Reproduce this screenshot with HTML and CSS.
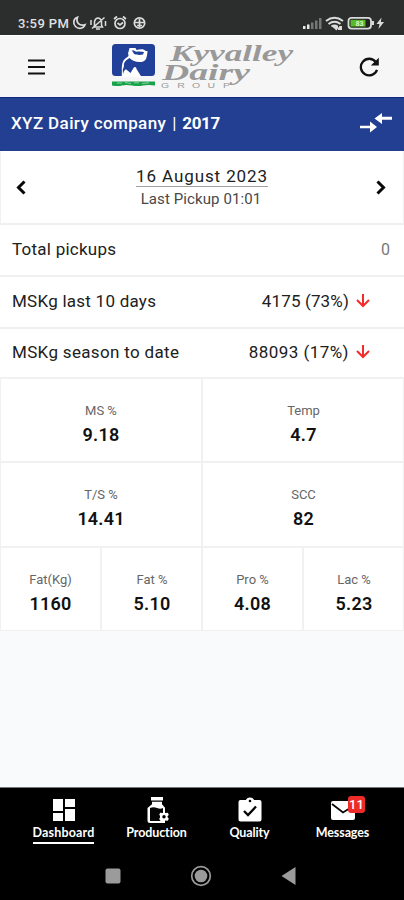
FILE: index.html
```html
<!DOCTYPE html>
<html lang="en">
<head>
<meta charset="utf-8">
<title>Dairy dashboard</title>
<link rel="stylesheet" href="styles.css">
</head>
<body>
<div class="phone">
  <div class="status">
    <span class="clock">3:59 PM</span>
    <svg class="status-icons" width="76" height="16" viewBox="0 0 76 16" fill="none" stroke="#dcdcdc" stroke-width="1.7">
      <path d="M5.500 2.200C1 3.600.8 8.800 3.500 11.500 6.600 14.600 11.500 13.600 13 9.700 7.500 11.400 3.500 7.500 5.500 2.200Z"/>
      <path d="M22 12h8.500l-1-2V6.500Q28.500 3 26 3t-3.500 3.500V10zM24 14h4M20 13.500 32.500 2.500M19 5v5M33.500 6v5" stroke-width="1.500"/>
      <circle cx="48" cy="8.500" r="5"/><path d="m42 4 3-2.500M54 4l-3-2.500M45.500 8l2.500 2 3-2.500"/>
      <circle cx="67.500" cy="8" r="5.200"/><path d="M67.500 4v8M63 7.500h9M65 10.500h5"/>
    </svg>
    <svg class="status-right" width="84" height="16" viewBox="0 0 84 16">
      <g fill="#e8e8e8"><path d="M1 11h2.500v3H1zM5 9.500h2.500V14H5z"/></g>
      <g fill="#757676"><path d="M9 7.500h2.500V14H9zM13 5.500h2.500V14H13zM17 3h2.500v11H17z"/></g>
      <g fill="none" stroke="#dcdcdc" stroke-width="2"><path d="M24 6q8.500-6.500 17 0M26.500 9q6-4.500 12 0M29.500 11.500q3-2 6 0"/></g>
      <path d="m29.500 11 5 4.500 3-4.500zM36 11h4v4h-4z" fill="#dcdcdc"/>
      <rect x="46.500" y="2.800" width="22.500" height="10.800" rx="3" fill="#202320" stroke="#dadada" stroke-width="1.800"/>
      <path d="M48.500 4.800h15v6.800h-15z" fill="#59b82b"/><path d="M69.500 6h2.500v4h-2.500z" fill="#dadada"/>
      <text class="battery" x="57.500" y="11" text-anchor="middle">83</text>
      <path d="m79.500 2.500-5 6.500h3l-1 5 5.500-7h-3.200z" fill="#dcdcdc"/>
    </svg>
  </div>
  <header class="header">
    <svg width="17" height="16" viewBox="0 0 17 16"><path d="M0 1.500h17M0 8h17M0 14.500h17" stroke="#111" stroke-width="2.200"/></svg>
    <svg class="logo" width="186" height="48" viewBox="0 0 186 48">
      <rect x="1" y="1" width="43" height="32" rx="3.500" fill="#21409a"/>
      <path d="M10.500 34c1-4-.5-9 1-14 1-4 4-5 6-7 0-2-1-3 0-4l1-4h6l1 2c4-1 8-1 9 1h2c-.5 6-1 10-6 11-5 .5-9-1-12-4l-3 2c-3 3-3 5-2 8l6 5 3-5c1-2 3-1 3 1l5 8z" fill="#fff"/>
      <path d="M20.500 7.500h2.500l2 1.200c3-.5 6-.3 8 .4l-1 2.400c-3 .7-7 .4-9-.5l-1-2z" fill="#21409a"/>
      <path d="m17 17-4 6q-2 4-1 8 1-4 4-6l2-3z" fill="#21409a"/>
      <path d="M1 38.500h43v4q-7-1-12 0t-11 0-10 0-10 0z" fill="#18a34a"/>
      <path d="M6 40h5m3-.5 6 1m3-.7h5m3 .6 7-.6" stroke="#bce3c6" stroke-width=".7" fill="none"/>
      <g class="brand">
        <text x="59" y="18" textLength="123" lengthAdjust="spacingAndGlyphs" class="brand-name">Kyvalley</text>
        <text x="51" y="36.500" textLength="88" lengthAdjust="spacingAndGlyphs" class="brand-name">Dairy</text>
        <text transform="translate(50 44.800) scale(1.5 1)" x="0 10.800 20.700 31 41.300" class="brand-group">GROUP</text>
      </g>
    </svg>
    <svg class="refresh" width="20" height="20" viewBox="0 0 20 20"><path d="M16.600 4.800A8.300 8.300 0 1 0 18 12.800" fill="none" stroke="#111" stroke-width="2.300"/><path d="M19.800.8V8.500h-8z" fill="#111"/></svg>
  </header>
  <div class="company">
    <div><span class="company-name">XYZ Dairy company</span><span class="bar">|</span><b class="year">2017</b></div>
    <svg width="32" height="20" viewBox="0 0 32 20"><path d="M0 12.700h10V8.500l7 5.500-7 5.500v-4.200H0zM32 3.700H22V0l-7.500 5.500L22 11V6.800h10z" fill="#fff"/></svg>
  </div>
  <section class="date">
    <svg width="10" height="15" viewBox="0 0 10 15"><path d="m8.500 1.500-6 6 6 6" fill="none" stroke="#080808" stroke-width="3"/></svg>
    <div class="date-text"><div class="day">16 August 2023</div><div class="pickup">Last Pickup 01:01</div></div>
    <svg width="10" height="15" viewBox="0 0 10 15"><path d="m1.500 1.500 6 6-6 6" fill="none" stroke="#080808" stroke-width="3"/></svg>
  </section>
  <section class="rows">
    <div class="row first"><span class="l1">Total pickups</span><span class="zero">0</span></div>
    <div class="row"><span class="l2">MSKg last 10 days</span><span class="value v1">4175 (73%)</span><svg class="down" width="14" height="14" viewBox="0 0 14 14"><path d="M7 0v12M1 6l6 6 6-6" fill="none" stroke="#f52b2b" stroke-width="2"/></svg></div>
    <div class="row"><span class="l3">MSKg season to date</span><span class="value v2">88093 (17%)</span><svg class="down" width="14" height="14" viewBox="0 0 14 14"><path d="M7 0v12M1 6l6 6 6-6" fill="none" stroke="#f52b2b" stroke-width="2"/></svg></div>
  </section>
  <section class="metrics">
    <div class="cell wide"><span>MS %</span><b>9.18</b></div>
    <div class="cell wide"><span>Temp</span><b>4.7</b></div>
    <div class="cell wide"><span>T/S %</span><b>14.41</b></div>
    <div class="cell wide"><span>SCC</span><b>82</b></div>
    <div class="cell"><span>Fat(Kg)</span><b>1160</b></div>
    <div class="cell"><span>Fat %</span><b>5.10</b></div>
    <div class="cell"><span>Pro %</span><b>4.08</b></div>
    <div class="cell"><span>Lac %</span><b>5.23</b></div>
  </section>
  <footer class="footer">
    <nav class="tabs">
      <div class="tab active"><svg width="26" height="26" viewBox="0 0 26 26"><path d="M2 2h10v12H2zM14 2h10v8H14zM2 16h10v8H2zM14 12h10v12H14z" fill="#fff"/></svg><span class="t1">Dashboard</span></div>
      <div class="tab"><svg width="26" height="26" viewBox="0 0 26 26"><path d="M7 0h12v3.500H7zM8 4.700h10v2.500l3 3.500V26H6q-2.500 0-2.500-2.500V11L8 7.200z" fill="#fff"/><path d="M6 11q3.500-1.500 7 0t6 0v5l-3 2v4.500l1 1.500H6z" fill="#050505"/><path d="m20 14 1.300 2 2.500-.3 1 2-1.500 2 1.500 2-1 2-2.500-.3-1.300 2-1.300-2-2.500.3-1-2 1.500-2-1.500-2 1-2 2.500.3z" fill="#fff"/><circle cx="20" cy="19.700" r="1.700"/></svg><span class="t2">Production</span></div>
      <div class="tab"><svg width="26" height="26" viewBox="0 0 26 26"><path d="M3.500 3H9q.7-2.500 4-2.500T17 3h5.500q2 0 2 2v17.500q0 2-2 2h-19q-2 0-2-2V5q0-2 2-2z" fill="#fff"/><circle cx="13" cy="4" r="1.300"/><path d="m7 14 4 4 8-8.500" stroke="#050505" stroke-width="2.300" fill="none"/></svg><span class="t3">Quality</span></div>
      <div class="tab"><svg width="26" height="26" viewBox="0 0 26 26"><path d="M3 4h20q2 0 2 2v15q0 2-2 2H3q-2 0-2-2V6q0-2 2-2z" fill="#fff"/><path d="m2 7 11 8.500L25 8" stroke="#050505" stroke-width="1.800" fill="none"/></svg><span class="t4">Messages</span><i class="badge">11</i></div>
    </nav>
    <div class="system">
      <svg width="16" height="16" viewBox="0 0 16 16"><rect x=".5" y=".5" width="15" height="15" rx="2" fill="#9b9b9b"/></svg>
      <svg width="22" height="22" viewBox="0 0 22 22"><circle cx="11" cy="11" r="9.300" fill="none" stroke="#9b9b9b" stroke-width="1.700"/><circle cx="11" cy="11" r="6.300" fill="#9b9b9b"/></svg>
      <svg width="15" height="18" viewBox="0 0 15 18"><path d="M14.500 0v18L.5 9z" fill="#9b9b9b"/></svg>
    </div>
  </footer>
</div>
</body>
</html>
```
FILE: styles.css
```css
* { box-sizing: border-box; }
body { margin: 0; background: #f8fafb; color: #202020; font-family: Roboto, sans-serif; }
svg { display: block; flex: none; }
.phone { width: 404px; height: 900px; display: flex; flex-direction: column; overflow: hidden; white-space: nowrap; }
.status { height: 35px; flex: none; padding: 12px 18px 0; background: #2c2e2d; color: #e0e0e0; display: flex; }
.clock { font-size: 13px; line-height: 23px; font-weight: 500; width: 54px; letter-spacing: .4px; }
.status-icons { margin-top: 3px; }
.status-right { margin: 3px 0 0 auto; }
.battery { font: 700 7px Roboto, sans-serif; fill: #d8f5cb; }
.header { height: 62px; flex: none; border-top: 1px solid #fff; background: #f6f6f6; padding: 7px 25px 0 28px; display: flex; }
.header > svg:first-child { margin-top: 16px; }
.logo { margin-left: 66px; overflow: visible; }
.brand { fill: #999; font-family: "Liberation Serif", serif; }
.brand-name { font-size: 24px; font-weight: 700; font-style: italic; }
.brand-group { font: 7px "Liberation Sans", sans-serif; }
.refresh { margin: 14px 0 0 auto; }
.company { height: 54px; flex: none; padding: 0 12px 4px 11px; color: #fff; background: #223f92; border-top: 1px solid #10277e; display: flex; align-items: center; justify-content: space-between; font-size: 17px; }
.company-name { font-weight: 500; letter-spacing: .38px; }
.bar { margin: 0 6px; }
.year { font-weight: 700; letter-spacing: -.4px; }
.date { height: 72px; flex: none; padding: 0 17px 0 15px; background: #fff; display: flex; justify-content: space-between; align-items: center; border-left: 1px solid #f1f1f1; border-right: 1px solid #f1f1f1; }
.date-text { text-align: center; padding-top: 3px; }
.day { font-size: 17px; letter-spacing: .9px; line-height: 20px; border-bottom: 1px solid #a0a0a0; margin-left: 2px; }
.pickup { color: #484848; font-size: 15px; line-height: 25px; letter-spacing: .1px; }
.rows { flex: none; background: #fff; }
.row { height: 51.500px; padding: 0 34px 2px 12px; border-top: 2px solid #f0f0f0; display: flex; align-items: center; font-size: 17px; }
.row.first { height: 52px; padding-right: 14px; }
.l1, .l2, .l3 { letter-spacing: .25px; }
.l3 { letter-spacing: .33px; }
.zero { margin-left: auto; font-size: 16px; color: #777; }
.value { margin-left: auto; }
.v1 { letter-spacing: .15px; }
.v2 { letter-spacing: .45px; }
.down { margin-left: 7px; }
.metrics { height: 254px; flex: none; display: grid; grid-template-columns: 101px 101px 101px 101px; grid-template-rows: repeat(3, 84.300px); margin-top: -1px; border: 1px solid #f1f1f1; border-width: 1px 0 0; }
.cell { background: #fff; border: 1px solid #f1f1f1; display: flex; flex-direction: column; align-items: center; padding-top: 23px; }
.cell.wide { grid-column: span 2; }
.cell span { color: #666; font-size: 13px; line-height: 18px; letter-spacing: 0; }
.cell b { color: #111; font-size: 18px; line-height: 29px; font-weight: 600; letter-spacing: .2px; }
.cell:nth-child(even) { padding-left: 1px; }
.footer { height: 113px; flex: none; margin-top: auto; border-top: 1px solid #777; background: #000; }
.tabs { height: 69px; padding: 9px 15px 0 17px; display: grid; grid-template-columns: repeat(4, 93px); }
.tab { color: #fff; display: flex; flex-direction: column; align-items: center; position: relative; }
.tab span { font-family: Lato, sans-serif; font-size: 12.500px; line-height: 18px; margin-top: 1px; font-weight: 700; letter-spacing: -.1px; }
.tab .t1 { letter-spacing: .15px; }
.tab.active span { border-bottom: 2px solid #fff; }
.badge { position: absolute; left: 52px; top: -1px; width: 17px; height: 17px; border-radius: 3px; background: #ed2b28; color: #fff; text-align: center; font: 500 13px/17px Roboto, sans-serif; }
.system { display: flex; align-items: center; height: 40px; padding: 0 108px 2px 105px; justify-content: space-between; }
```
